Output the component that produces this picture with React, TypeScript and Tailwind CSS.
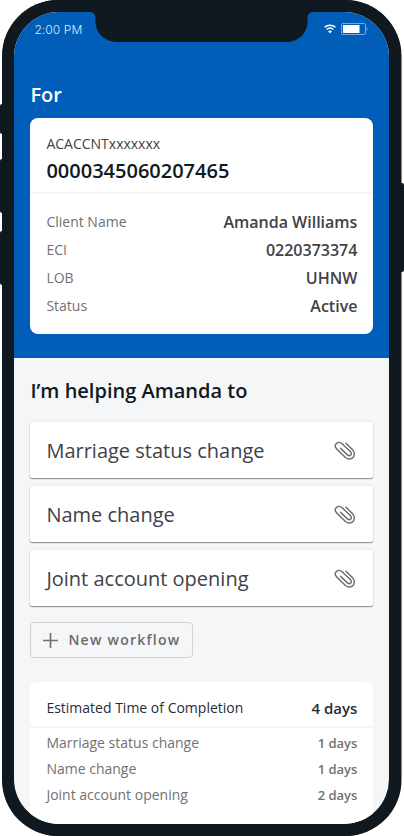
import React from "react";

const details = [
  ["Client Name", "Amanda Williams"],
  ["ECI", "0220373374"],
  ["LOB", "UHNW"],
  ["Status", "Active"],
];

const workflows = ["Marriage status change", "Name change", "Joint account opening"];

const estimates = [
  ["Marriage status change", "1 days"],
  ["Name change", "1 days"],
  ["Joint account opening", "2 days"],
];

function Paperclip() {
  return (
    <svg className="mt-px" width="22" height="20" viewBox="0 0 22 20" fill="none" stroke="#6b6b6e" strokeWidth="1.45" strokeLinecap="round">
      <path d="M12 2.2 L18.6 8.7 C20.7 10.8 20.9 14.4 19 16.5 C17 18.6 13.6 18.5 11.4 16.4 L2.8 8.1 C1.1 6.4 1 4 2.4 2.5 C3.9 1 6.4 1.1 8.1 2.7 L16.2 10.5 C17.4 11.7 17.7 13.1 16.8 14 C15.8 15.1 14.2 14.6 13.1 13.6 L6.6 7.2" />
    </svg>
  );
}

function StatusBar() {
  return (
    <div className="flex h-[35px] items-center justify-between pl-5 pr-[21px]">
      <span className="font-['Inter'] text-[12px] font-light leading-4 tracking-[0.1px] text-[#dce9f6]">2:00 PM</span>
      <div className="flex items-center gap-[5px] pb-[2px]">
        <svg width="12" height="10" viewBox="0 0 12 10" fill="none" stroke="white" strokeWidth="1.5">
          <path d="M.6 3.3C3.7.4 8.3.4 11.4 3.3M2.7 5.5C4.6 3.8 7.4 3.8 9.3 5.5" />
          <path d="M4.1 7.3Q6 5.8 7.9 7.3L6 9.4Z" fill="white" stroke="none" />
        </svg>
        <svg width="27" height="12" viewBox="0 0 27 12" fill="none">
          <rect x=".5" y=".5" width="24" height="11" rx="1.5" stroke="#73a8dc" />
          <rect x="2" y="2" width="16.5" height="8" fill="white" />
          <path d="M26 4.5v3" stroke="#73a8dc" />
        </svg>
      </div>
    </div>
  );
}

export default function App() {
  return (
    <div className="relative h-[836px] w-[404px] overflow-hidden bg-white pl-[2.4px] pr-[2.6px] font-['Open_Sans',sans-serif]">
      <i className="absolute left-0 top-[104px] h-[30px] w-1 rounded-l-[2px] bg-[#101920]" />
      <i className="absolute left-0 top-[159px] h-[54px] w-1 rounded-l-[2px] bg-[#101920]" />
      <i className="absolute left-0 top-[231px] h-[54px] w-1 rounded-l-[2px] bg-[#101920]" />
      <i className="absolute right-0 top-[183px] h-[89px] w-1 rounded-r-[2px] bg-[#101920]" />

      <div className="relative h-[836px] rounded-[56px] bg-[#101920] p-3 shadow-[0.5px_0_0_#101920]">
        <div className="h-[812px] overflow-hidden rounded-[45px] bg-[#f5f6f8]">
          <header className="h-[346px] bg-[#005eb8] px-4">
            <div className="-mx-4"><StatusBar /></div>
            <h1 className="mt-9 text-[20px] font-semibold leading-6 text-white">For</h1>
            <section className="mt-[11px] h-[216px] rounded-[8px] bg-white">
              <div className="h-[76px] border-b-2 border-[#f5f6f7] px-4 pt-[17px]">
                <p className="text-[14px] leading-[18px] text-[#414146]">ACACCNTxxxxxxx</p>
                <p className="mt-[5px] text-[20px] font-semibold leading-[26px] text-[#101920]">0000345060207465</p>
              </div>
              <dl className="px-4 pt-[14px]">
                {details.map(([label, value]) => (
                  <div key={label} className="flex h-7 items-center justify-between">
                    <dt className="pb-[2px] text-[14px] text-[#717174]">{label}</dt>
                    <dd className="text-[16px] font-semibold text-[#414146]">{value}</dd>
                  </div>
                ))}
              </dl>
            </section>
          </header>

          <main className="px-4 pt-5">
            <h2 className="text-[20px] font-semibold leading-[26px] text-[#101920]">I’m helping Amanda to</h2>
            <div className="mt-[18px] flex flex-col gap-2">
              {workflows.map((name) => (
                <div key={name} className="flex h-14 items-center justify-between rounded-[2px] bg-white pl-4 pr-[17px] shadow-[0_1px_1px_#85878a,0_0_2px_#d5d6d8]">
                  <span className="pt-px text-[20px] text-[#414146]">{name}</span>
                  <Paperclip />
                </div>
              ))}
            </div>
            <button className="mt-4 flex h-9 w-[163px] items-center gap-[11px] rounded-[4px] border border-[#cfd1d4] pl-3 text-[14px] font-semibold tracking-[1.25px] text-[#6b6b6e]">
              <svg width="15" height="15" viewBox="0 0 15 15" stroke="#717174" strokeWidth="1.7"><path d="M7.5 0v15M0 7.5h15" /></svg>
              <span className="-ml-px whitespace-nowrap pb-[2px]">New workflow</span>
            </button>

            <section className="mt-6 h-[150px] rounded-t-[6px] bg-white">
              <div className="flex h-[46px] items-center justify-between border-b-2 border-[#f5f6f7] px-4 pt-[7px]">
                <span className="text-[14px] text-[#292b38]">Estimated Time of Completion</span>
                <span className="pt-[2px] text-[15px] font-semibold text-[#292b38]">4 days</span>
              </div>
              <div className="px-4 pt-[3px]">
                {estimates.map(([name, time]) => (
                  <div key={name} className="flex h-[26px] items-center justify-between text-[#717174]">
                    <span className="pb-[3px] text-[14px]">{name}</span>
                    <span className="text-[13px] font-semibold">{time}</span>
                  </div>
                ))}
              </div>
            </section>
          </main>
        </div>
        <svg className="absolute left-[82px] top-[11px]" width="236" height="32" viewBox="0 0 236 32" fill="#101920">
          <path d="M0 0H236V1H229Q223.500 1 223.500 8V11C223.500 22 214 31 203 31H33C21 31 11.500 22 11.500 11V8Q11.500 1 6 1H0Z" />
        </svg>
      </div>
    </div>
  );
}
